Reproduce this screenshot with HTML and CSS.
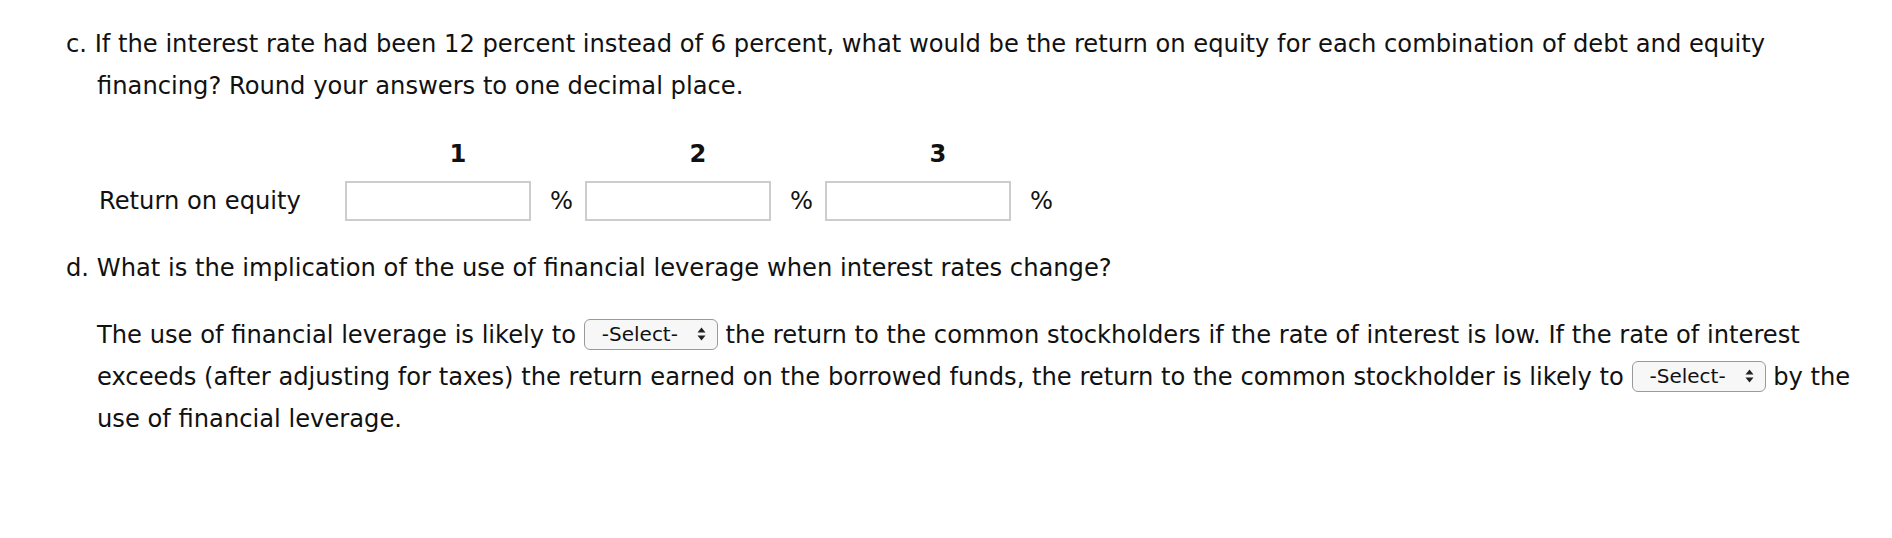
FILE: index.html
```html
<!DOCTYPE html>
<html>
<head>
<meta charset="utf-8">
<link rel="stylesheet" href="styles.css">
</head>
<body>
<div class="page">
  <p class="item">c. If the interest rate had been 12 percent instead of 6 percent, what would be the return on equity for each combination of debt and equity financing? Round your answers to one decimal place.</p>

  <div class="grid">
    <div class="cell"></div>
    <div class="head">1</div>
    <div class="head">2</div>
    <div class="head">3</div>
    <div class="rowlabel">Return on equity</div>
    <div class="entry"><span class="box"></span><span class="pct">%</span></div>
    <div class="entry"><span class="box"></span><span class="pct">%</span></div>
    <div class="entry"><span class="box"></span><span class="pct">%</span></div>
  </div>

  <p class="item item-d">d. What is the implication of the use of financial leverage when interest rates change?</p>

  <p class="answer">The use of financial leverage is likely to <span class="select">-Select-<svg class="arrows" width="9" height="14" viewBox="0 0 9 14"><path d="M4.5 0.5 L8.5 5.5 L0.5 5.5 Z M4.5 13.5 L8.5 8.5 L0.5 8.5 Z" fill="#222"/></svg></span> the return to the common stockholders if the rate of interest is low. If the rate of interest exceeds (after adjusting for taxes) the return earned on the borrowed funds, the return to the common stockholder is likely to <span class="select">-Select-<svg class="arrows" width="9" height="14" viewBox="0 0 9 14"><path d="M4.5 0.5 L8.5 5.5 L0.5 5.5 Z M4.5 13.5 L8.5 8.5 L0.5 8.5 Z" fill="#222"/></svg></span> by the use of financial leverage.</p>
</div>
</body>
</html>
```

FILE: styles.css
```css
html, body {
  margin: 0;
  padding: 0;
  background: #ffffff;
}

body {
  font-family: "DejaVu Sans", Verdana, sans-serif;
  font-size: 24.2px;
  color: #111111;
}

.page {
  padding: 23px 16px 0 66px;
}

.item {
  margin: 0;
  line-height: 42px;
  padding-left: 31px;
  text-indent: -31px;
}

.grid {
  display: grid;
  grid-template-columns: 279px 240px 240px 240px;
  grid-template-rows: 30px 40px;
  row-gap: 12px;
  margin-top: 32px;
}

.head {
  font-weight: bold;
  text-align: center;
  line-height: 30px;
  width: 226px;
}

.rowlabel {
  padding-left: 33px;
  line-height: 40px;
}

.entry {
  display: flex;
  align-items: center;
  gap: 19px;
}

.box {
  display: block;
  width: 182px;
  height: 36px;
  border: 2px solid #cccccc;
  background: #ffffff;
}

.pct {
  line-height: 40px;
}

.item-d {
  margin-top: 26px;
}

.answer {
  margin: 25px 0 0 31px;
  line-height: 42px;
}

.select {
  display: inline-flex;
  align-items: center;
  justify-content: space-between;
  box-sizing: border-box;
  width: 134px;
  height: 31px;
  padding: 0 11px 0 17px;
  border: 1.5px solid #9a9a9a;
  border-radius: 6px;
  background: #f7f7f7;
  font-size: 20px;
  color: #111111;
  vertical-align: middle;
  position: relative;
  top: -2px;
}

.arrows {
  display: block;
}
```
